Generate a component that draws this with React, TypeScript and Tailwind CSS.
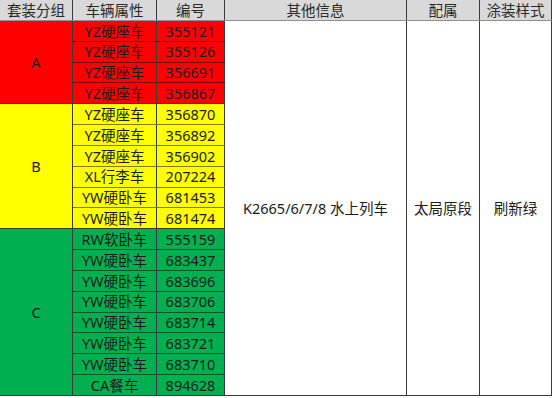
import React from 'react';

type Car = { kind: string; no: string };

const groups: { name: string; bg: string; cars: Car[] }[] = [
  {
    name: 'A',
    bg: 'bg-[#ff0000]',
    cars: [
      { kind: 'YZ硬座车', no: '355121' },
      { kind: 'YZ硬座车', no: '355126' },
      { kind: 'YZ硬座车', no: '356691' },
      { kind: 'YZ硬座车', no: '356867' },
    ],
  },
  {
    name: 'B',
    bg: 'bg-[#ffff00]',
    cars: [
      { kind: 'YZ硬座车', no: '356870' },
      { kind: 'YZ硬座车', no: '356892' },
      { kind: 'YZ硬座车', no: '356902' },
      { kind: 'XL行李车', no: '207224' },
      { kind: 'YW硬卧车', no: '681453' },
      { kind: 'YW硬卧车', no: '681474' },
    ],
  },
  {
    name: 'C',
    bg: 'bg-[#00b050]',
    cars: [
      { kind: 'RW软卧车', no: '555159' },
      { kind: 'YW硬卧车', no: '683437' },
      { kind: 'YW硬卧车', no: '683696' },
      { kind: 'YW硬卧车', no: '683706' },
      { kind: 'YW硬卧车', no: '683714' },
      { kind: 'YW硬卧车', no: '683721' },
      { kind: 'YW硬卧车', no: '683710' },
      { kind: 'CA餐车', no: '894628' },
    ],
  },
];

// shared cell look: centred text, dark line on the right
const cell = 'flex items-center justify-center border-r border-[#3a3a3a] whitespace-nowrap';
const head = `${cell} h-full`;

const App: React.FC = () => {
  return (
    <div className="w-[554px] h-[398px] bg-white text-[14.5px] leading-none text-[#1c1c1c] font-['Noto_Sans','Noto_Sans_CJK_SC',sans-serif] overflow-hidden">
      <div className="flex w-[552px]">
        {/* group / car type / number */}
        <div className="flex w-[225px] flex-col">
          <div className="flex h-[21px] border-b border-[#8f8f8f] bg-[#d9d9d9] text-[#2a2a2a]">
            <div className={`${head} w-[73px]`}>套装分组</div>
            <div className={`${head} w-[84px]`}>车辆属性</div>
            <div className={`${head} w-[68px]`}>编号</div>
          </div>

          {groups.map((g) => (
            <div key={g.name} className={`flex border-b border-[#3a3a3a] ${g.bg}`}>
              <div className={`${cell} w-[73px]`}>{g.name}</div>
              <div className="flex w-[152px] flex-col">
                {g.cars.map((c) => (
                  <div
                    key={c.no}
                    className="flex h-[20.833px] border-b border-black/50 last:h-[19.833px] last:border-b-0"
                  >
                    <div className={`${cell} w-[84px]`}>{c.kind}</div>
                    <div className={`${cell} w-[68px]`}>{c.no}</div>
                  </div>
                ))}
              </div>
            </div>
          ))}
        </div>

        {/* merged info columns */}
        <div className="flex w-[327px] flex-col">
          <div className="flex h-[21px] border-b border-[#8f8f8f] bg-[#d9d9d9] text-[#2a2a2a]">
            <div className={`${head} w-[182px]`}>其他信息</div>
            <div className={`${head} w-[73px]`}>配属</div>
            <div className={`${head} w-[72px]`}>涂装样式</div>
          </div>
          <div className="flex h-[375px] border-b border-[#3a3a3a]">
            <div className={`${cell} w-[182px]`}>K2665/6/7/8 水上列车</div>
            <div className={`${cell} w-[73px]`}>太局原段</div>
            <div className={`${cell} w-[72px]`}>刷新绿</div>
          </div>
        </div>
      </div>
    </div>
  );
};

export default App;
